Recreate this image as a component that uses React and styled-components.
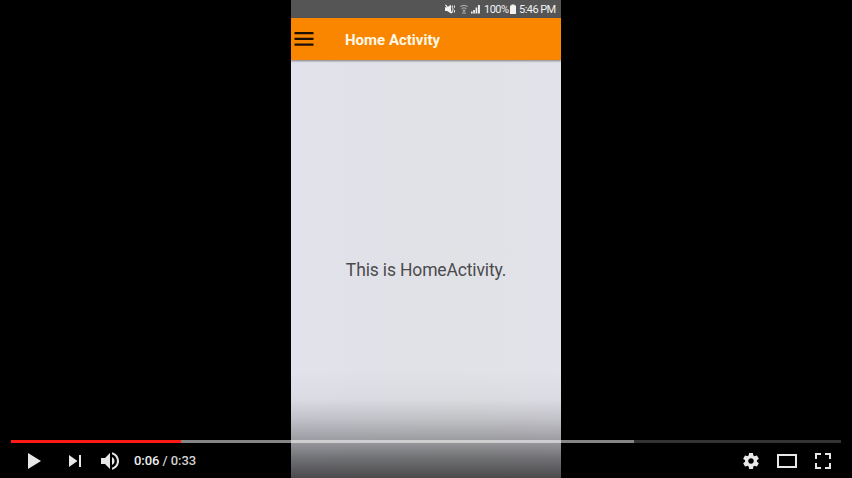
import React from "react";
import styled, { createGlobalStyle } from "styled-components";

const GlobalStyle = createGlobalStyle`
  body { margin: 0; background: #000; overflow: hidden; }
  * { box-sizing: border-box; }
`;

const Player = styled.main`
  position: relative;
  display: flex;
  justify-content: center;
  width: 852px;
  height: 478px;
  background: #000;
  overflow: hidden;
  font-family: Roboto, "Liberation Sans", sans-serif;
`;

const Phone = styled.section`
  display: flex;
  flex-direction: column;
  width: 270px;
  height: 100%;
  background: linear-gradient(90deg, #e1e2eb 0, #e1e2e8 35%, #e1e2e6 65%, #e2e2ea 100%);
`;

const StatusBar = styled.div`
  display: flex;
  flex: none;
  align-items: center;
  justify-content: flex-end;
  height: 18px;
  padding-right: 5px;
  background: #555;
  color: #f2f2f2;
  font-size: 11px;
  line-height: 18px;
  letter-spacing: -0.55px;
  white-space: nowrap;
`;

const StatusIcon = styled.svg`
  display: block;
  flex: none;
  width: ${(p) => p.$w}px;
  height: 10px;
  margin-right: ${(p) => p.$gap}px;
  fill: #f2f2f2;
`;

const StatusText = styled.span`
  width: ${(p) => p.$w}px;
  margin-right: ${(p) => p.$gap || 0}px;
  padding-top: 1px;
`;

const AppBar = styled.header`
  display: flex;
  flex: none;
  align-items: center;
  height: 42px;
  padding-left: 3px;
  background: #fa8600;
  box-shadow: 0 1px 2px rgba(0, 0, 0, 0.45);
`;

const MenuIcon = styled.svg`
  display: block;
  width: 20px;
  height: 14px;
  margin-right: 31px;
  fill: #1c1000;
`;

const Title = styled.h1`
  margin: 1px 0 0;
  color: #fff8e8;
  font-size: 15px;
  font-weight: 700;
  white-space: nowrap;
`;

const Content = styled.div`
  display: flex;
  flex: 1;
  justify-content: center;
  padding-top: 198px;
  color: #4b4b4e;
  font-size: 17.5px;
  line-height: 24px;
  letter-spacing: -0.15px;
  white-space: nowrap;
`;

const Chrome = styled.footer`
  position: absolute;
  inset: auto 0 0;
  display: flex;
  flex-direction: column;
  justify-content: flex-end;
  height: 108px;
  padding: 0 11px;
  background: linear-gradient(
    rgba(0, 0, 0, 0) 0,
    rgba(0, 0, 0, 0.03) 27%,
    rgba(0, 0, 0, 0.14) 45%,
    rgba(0, 0, 0, 0.31) 65%,
    rgba(0, 0, 0, 0.5) 82%,
    rgba(0, 0, 0, 0.67) 100%
  );
`;

const Track = styled.div`
  display: grid;
  grid-template-columns: 170px 453px 1fr;
  flex: none;
  height: 3px;
`;

const Segment = styled.div`
  background: ${(p) => p.$color};
`;

const Controls = styled.div`
  display: flex;
  flex: none;
  height: 35px;
  padding: 0 0 0 5px;
`;

const Button = styled.button`
  flex: none;
  width: 36px;
  height: 36px;
  margin: 0 0 0 ${(p) => p.$gap || 0}px;
  padding: 0;
  border: 0;
  background: none;
`;

const Glyph = styled.svg`
  display: block;
  width: 36px;
  height: 36px;
  fill: #e8e8e8;
`;

const Time = styled.span`
  flex: 1;
  padding-left: 5px;
  color: #d2d2d2;
  font-size: 13px;
  font-weight: 500;
  letter-spacing: -0.06px;
  line-height: 36px;
  white-space: nowrap;
`;

const Current = styled.span`
  color: #eee;
`;

const PATHS = {
  play: "M12 26 25 18 12 10z",
  next: "M12 24 20.5 18 12 12zM22 12v12h2V12z",
  volume:
    "M8 21h4l5 5V10l-5 5H8zM19 14v8c1.48-.68 2.5-2.23 2.5-4 0-1.74-1.02-3.26-2.5-4zM19 11.29c2.89.86 5 3.54 5 6.71s-2.11 5.85-5 6.71v2.06c4.01-.91 7-4.49 7-8.77s-2.99-7.86-7-8.77z",
  settings:
    "m23.94 18.78c.03-.25.05-.51.05-.78 0-.27-.02-.52-.05-.78l1.68-1.32c.15-.12.19-.33.09-.51l-1.6-2.76c-.09-.17-.31-.24-.48-.17l-1.99.8c-.41-.32-.86-.58-1.35-.78l-.3-2.12c-.02-.19-.19-.33-.39-.33h-3.2c-.2 0-.36.14-.39.33l-.3 2.12c-.48.2-.93.47-1.35.78l-1.99-.8c-.18-.07-.39 0-.48.17l-1.6 2.76c-.1.17-.05.39.09.51l1.68 1.32c-.03.25-.05.52-.05.78s.02.52.05.78l-1.68 1.32c-.15.12-.19.33-.09.51l1.6 2.76c.09.17.31.24.48.17l1.99-.8c.41.32.86.58 1.35.78l.3 2.12c.02.19.19.33.39.33h3.2c.2 0 .36-.14.39-.33l.3-2.12c.48-.2.93-.47 1.35-.78l1.99.8c.18.07.39 0 .48-.17l1.6-2.76c.09-.17.05-.39-.09-.51zm-5.94 2.01c-1.54 0-2.8-1.25-2.8-2.8 0-1.54 1.25-2.8 2.8-2.8s2.8 1.25 2.8 2.8c0 1.54-1.25 2.8-2.8 2.8z",
  theater: "M28 11v14H8V11zM10 13v10h16V13z",
  fullscreen:
    "M10 16h2v-4h4v-2h-6zM20 10v2h4v4h2v-6zM24 20v4h-4v2h6v-6zM12 20h-2v6h6v-2h-4z",
};

function Control({ name, label, gap }) {
  return (
    <Button aria-label={label} $gap={gap}>
      <Glyph viewBox="0 0 36 36">
        <path fillRule="evenodd" d={PATHS[name]} />
      </Glyph>
    </Button>
  );
}

export default function App() {
  return (
    <>
      <GlobalStyle />
      <Player>
        <Phone>
          <StatusBar>
            <StatusIcon $w={10} $gap={5} viewBox="0 0 10 10">
              <path d="M0 3.2h2.2L6 .8v8.7L2.2 7H0z" />
              <path d="M.5 .8 7 9.2" fill="none" stroke="#f2f2f2" strokeWidth="1.2" />
              <path d="M7.3 1.5v2.2l1 1.3-1 1.3V8.5M9.4 1.5v2.3M9.4 6v2.5" fill="none" stroke="#f2f2f2" strokeWidth="1" />
            </StatusIcon>
            <StatusIcon $w={8} $gap={3} viewBox="0 0 8 10">
              <path d="M.3 2.5Q4 0 7.7 2.5M1.6 4.5Q4 3 6.4 4.5M2.7 6.3h2.6M4 6v2M2 9h4" fill="none" stroke="#b8b8b8" strokeWidth="1" />
            </StatusIcon>
            <StatusIcon $w={9} $gap={4} viewBox="0 0 9 10">
              <path d="M0 7.5h1.6V9.5H0zM2.2 6h1.7v3.5H2.2zM4.6 3.5h1.7v6H4.6zM7 1h1.9v8.5H7z" />
            </StatusIcon>
            <StatusText $w={24} $gap={2}>100%</StatusText>
            <StatusIcon $w={6} $gap={3} viewBox="0 0 6 10">
              <path d="M1.5 .5h3v1H6V10H0V1.5h1.5z" />
            </StatusIcon>
            <StatusText $w={37}>5:46 PM</StatusText>
          </StatusBar>
          <AppBar>
            <MenuIcon viewBox="0 0 20 14">
              <path d="M.5 0h19v2.2H.5zM.5 5.8h19V8H.5zM.5 11.5h19v2.2H.5z" />
            </MenuIcon>
            <Title>Home Activity</Title>
          </AppBar>
          <Content>This is HomeActivity.</Content>
        </Phone>
        <Chrome>
          <Track>
            <Segment $color="#ff1a16" />
            <Segment $color="rgba(255, 255, 255, 0.52)" />
            <Segment $color="rgba(255, 255, 255, 0.2)" />
          </Track>
          <Controls>
            <Control name="play" label="Play" />
            <Control name="next" label="Next" gap={5} />
            <Control name="volume" label="Mute" />
            <Time>
              <Current>0:06</Current> / 0:33
            </Time>
            <Control name="settings" label="Settings" />
            <Control name="theater" label="Theater mode" />
            <Control name="fullscreen" label="Full screen" />
          </Controls>
        </Chrome>
      </Player>
    </>
  );
}
